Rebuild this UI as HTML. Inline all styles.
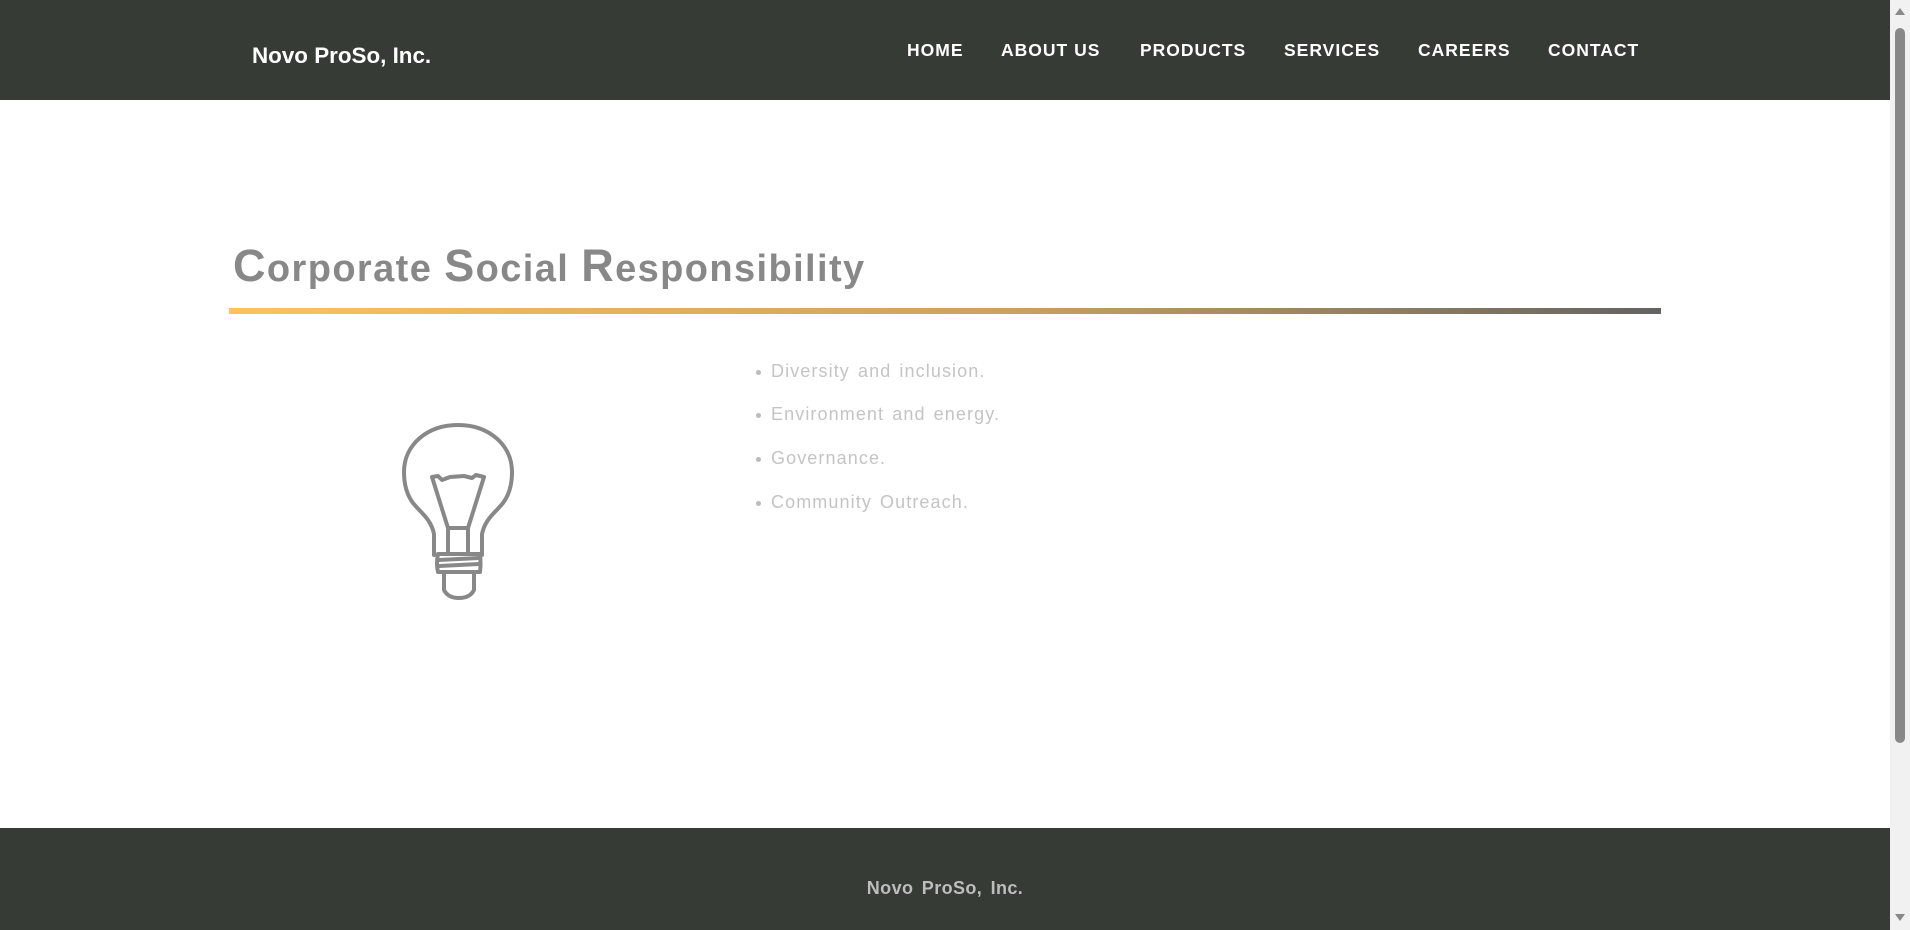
<!DOCTYPE html>
<html><head><meta charset="utf-8"><style>
html,body{margin:0;padding:0}
body{width:1910px;height:930px;overflow:hidden;position:relative;background:#fff;font-family:"Liberation Sans",Arial,sans-serif}
.hdr{position:absolute;left:0;top:0;width:1890px;height:100px;background:#363b36}
.logo{position:absolute;left:252px;top:42px;color:#fff;font-weight:bold;font-size:22.4px;line-height:28px}
.nav{position:absolute;top:39px;color:#fff;font-weight:bold;font-size:17.5px;letter-spacing:1px;line-height:22px;white-space:nowrap}
.title{position:absolute;left:233px;top:236px;color:#888;font-weight:bold;font-size:38px;letter-spacing:1.4px;line-height:60px;white-space:nowrap}
.title b{font-size:45px}
.bar{position:absolute;left:229px;top:308px;width:1432px;height:6px;background:linear-gradient(90deg,#fcc35c,#c9a160 55%,#636363)}
.li{position:absolute;left:771px;color:#c4c4c4;font-size:18px;letter-spacing:1.1px;word-spacing:2px;line-height:22px;white-space:nowrap}
.li:before{content:"";position:absolute;left:-15px;top:10px;width:5px;height:5px;border-radius:50%;background:#bbb}
.ftr{position:absolute;left:0;top:828px;width:1890px;height:102px;background:#363b36}
.ftxt{position:absolute;left:0;width:1890px;top:878px;text-align:center;color:#bdbdbd;font-weight:bold;font-size:18px;letter-spacing:0.4px;word-spacing:3px}
.sb{position:absolute;left:1890px;top:0;width:20px;height:930px;background:#f1f1f1}
.th{position:absolute;left:1895px;top:28px;width:10px;height:715px;background:#888;border-radius:5px}
</style></head><body>
<div class="hdr"></div>
<div class="logo">Novo ProSo, Inc.</div>
<div class="nav" style="left:907px">HOME</div>
<div class="nav" style="left:1001px">ABOUT US</div>
<div class="nav" style="left:1140px">PRODUCTS</div>
<div class="nav" style="left:1284px">SERVICES</div>
<div class="nav" style="left:1418px">CAREERS</div>
<div class="nav" style="left:1548px">CONTACT</div>
<div class="title"><b>C</b>orporate <b>S</b>ocial <b>R</b>esponsibility</div>
<div class="bar"></div>
<svg style="position:absolute;left:380px;top:400px" width="160" height="210" viewBox="0 0 160 210" fill="none" stroke="#888" stroke-width="4" stroke-linejoin="round" stroke-linecap="round">
<path d="M54,155 L54,134 C51,119 41,113 33,103 C27,95 24,84 24,72 C24,45 47,25 78,25 C109,25 132,45 132,72 C132,84 129,95 123,103 C115,113 105,119 102,134 L102,155"/>
<path d="M52,77 L58,76 L62,80 L70,77 L84,76 L92,78 L96,75 L104,77 L88,128 L68,128 Z"/>
<path d="M68,128 L68,154 M88,128 L88,154"/>
<path d="M58,154 L100,154 Q101,164 100,172 L58,172 Q56,164 58,154 Z"/>
<path d="M59,160 L99,158 M59,166 L99,164"/>
<path d="M64,172 L64,190 Q68,198 79,198 Q90,198 94,190 L94,172"/>
</svg>
<div class="li" style="top:360px">Diversity and inclusion.</div>
<div class="li" style="top:403px">Environment and energy.</div>
<div class="li" style="top:447px">Governance.</div>
<div class="li" style="top:491px">Community Outreach.</div>
<div class="ftr"></div>
<div class="ftxt">Novo ProSo, Inc.</div>
<div class="sb"></div>
<div class="th"></div>
<div style="position:absolute;left:1895px;top:8px;width:0;height:0;border-left:5px solid transparent;border-right:5px solid transparent;border-bottom:7px solid #888"></div>
<div style="position:absolute;left:1895px;top:914px;width:0;height:0;border-left:5px solid transparent;border-right:5px solid transparent;border-top:7px solid #888"></div>
</body></html>
